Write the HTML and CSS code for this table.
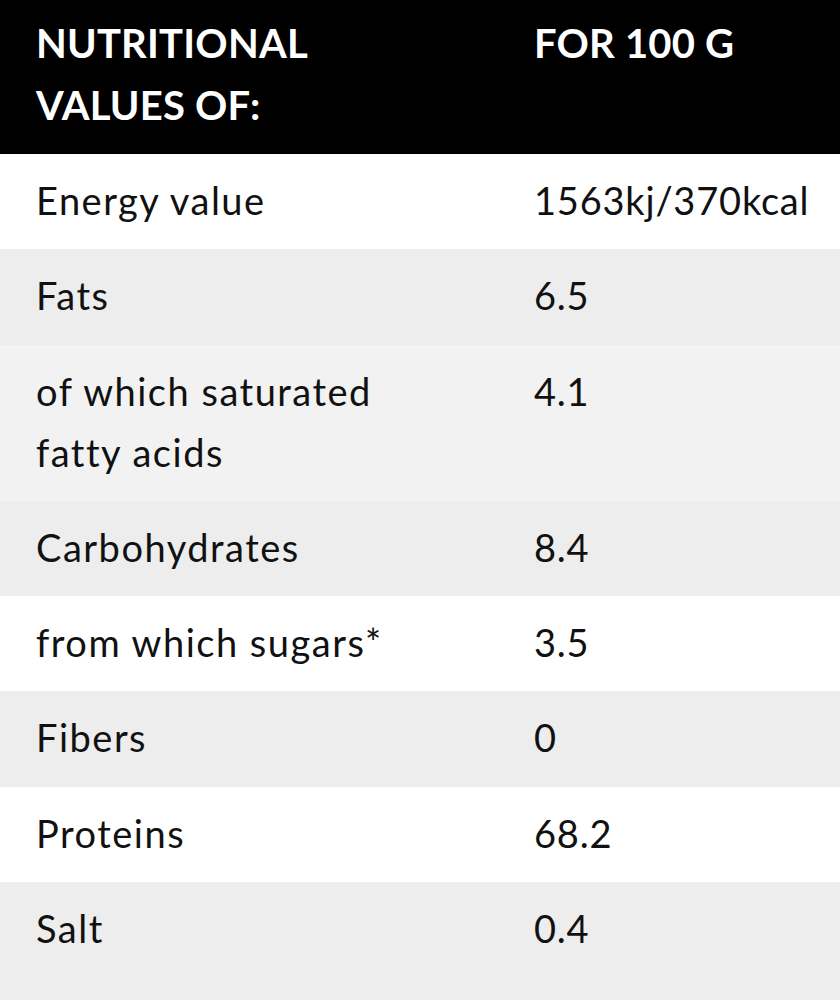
FILE: index.html
```html
<!DOCTYPE html>
<html>
<head>
<meta charset="utf-8">
<link rel="stylesheet" href="styles.css">
</head>
<body>
<table class="nutri">
  <thead>
    <tr class="head">
      <th class="c1">NUTRITIONAL<br>VALUES OF:</th>
      <th class="c2">FOR 100 G</th>
    </tr>
  </thead>
  <tbody>
    <tr class="r-white"><td class="c1">Energy value</td><td class="c2">1563kj/370kcal</td></tr>
    <tr class="r-grey"><td class="c1">Fats</td><td class="c2">6.5</td></tr>
    <tr class="r-light"><td class="c1">of which saturated<br>fatty acids</td><td class="c2">4.1</td></tr>
    <tr class="r-grey"><td class="c1">Carbohydrates</td><td class="c2">8.4</td></tr>
    <tr class="r-white"><td class="c1">from which sugars*</td><td class="c2">3.5</td></tr>
    <tr class="r-grey"><td class="c1">Fibers</td><td class="c2">0</td></tr>
    <tr class="r-white"><td class="c1">Proteins</td><td class="c2">68.2</td></tr>
    <tr class="r-grey"><td class="c1">Salt</td><td class="c2">0.4</td></tr>
  </tbody>
</table>
</body>
</html>
```

FILE: styles.css
```css
html, body {
  margin: 0;
  padding: 0;
  background: #ededed;
}
body {
  font-family: Lato, "Noto Sans", sans-serif;
  color: #111;
}
.nutri {
  width: 840px;
  border-collapse: collapse;
  table-layout: fixed;
}
.nutri th, .nutri td {
  text-align: left;
  vertical-align: top;
}
.nutri .head th {
  font-size: 40px;
  font-weight: 700;
  line-height: 62px;
  padding: 12px 0 18px 0;
  letter-spacing: 0.2px;
}
.nutri tbody td {
  font-size: 38px;
  font-weight: 400;
  line-height: 61px;
  padding: 16px 0 18.3px 0;
  letter-spacing: 1.5px;
}
.nutri .head .c1, .nutri tbody .c1 {
  width: 498px;
  padding-left: 36px;
}
.nutri .head .c2, .nutri tbody .c2 {
  padding-right: 10px;
}
.nutri tbody .c2 {
  letter-spacing: 0.8px;
}
.head {
  background: #000;
  color: #fff;
}
.r-white { background: #fff; }
.r-grey { background: #ededed; }
.r-light { background: #f2f2f2; }
```
